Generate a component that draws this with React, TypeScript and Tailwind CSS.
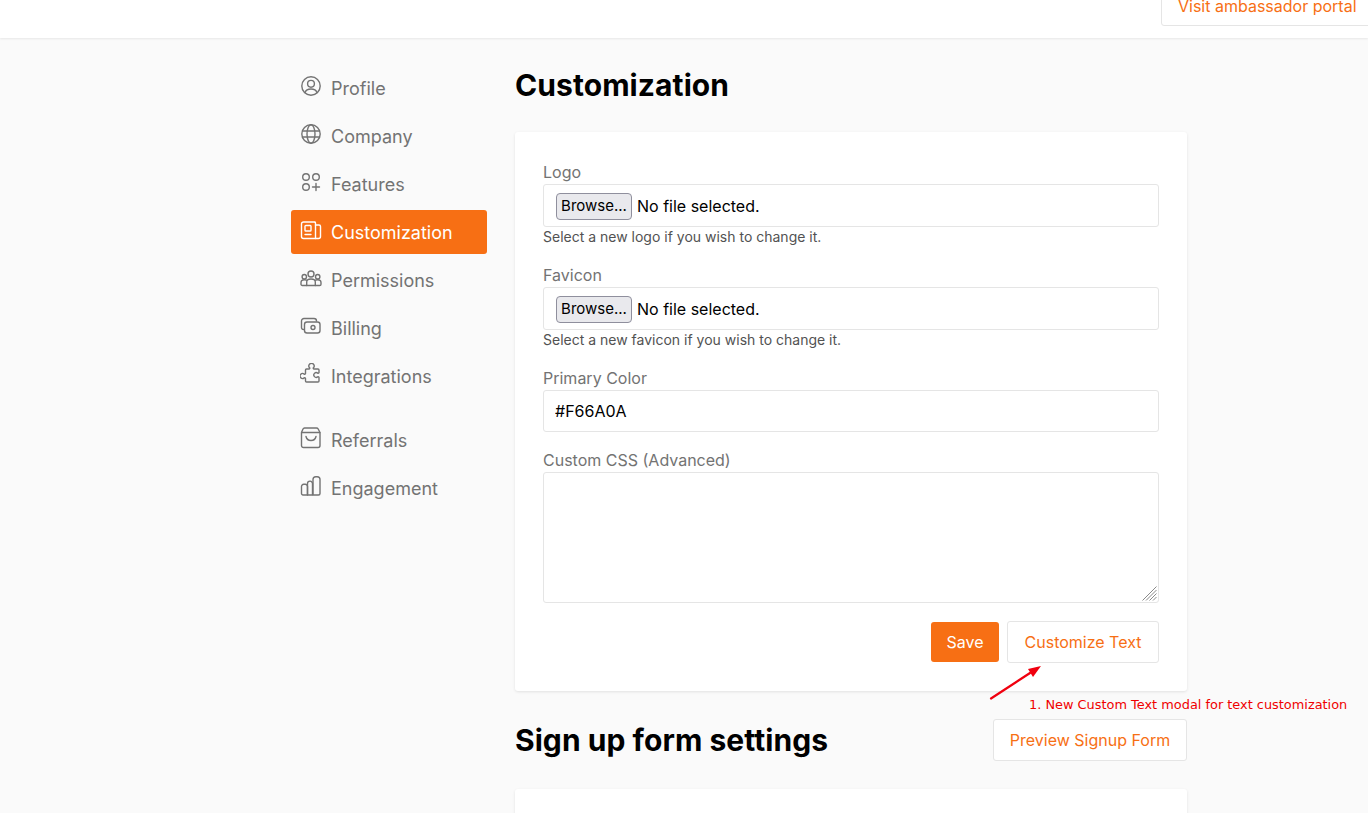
import type { ReactNode } from 'react'

function Icon({ children }: { children: ReactNode }) {
  return (
    <svg viewBox="0 0 22 22" fill="none" stroke="currentColor" strokeWidth="1.4" strokeLinecap="round" strokeLinejoin="round" className="h-[22px] w-[22px] shrink-0">
      {children}
    </svg>
  )
}

const NAV_TOP = [
  {
    label: 'Profile',
    icon: (
      <>
        <circle cx="11" cy="11" r="9.2" />
        <circle cx="11" cy="8.8" r="3.4" />
        <path d="M5 17.500c.8-2.400 2.800-3.500 6-3.500s5.200 1.100 6 3.500" />
      </>
    ),
  },
  {
    label: 'Company',
    icon: (
      <>
        <circle cx="11" cy="11" r="9.2" />
        <path d="M2.500 8h17M2.500 14h17" />
        <ellipse cx="11" cy="11" rx="4" ry="9.200" />
      </>
    ),
  },
  {
    label: 'Features',
    icon: (
      <>
        <circle cx="6" cy="6" r="3.300" />
        <circle cx="16" cy="6" r="3.300" />
        <circle cx="6" cy="16" r="3.300" />
        <path d="M16 12.500v7M12.500 16h7" />
      </>
    ),
  },
  {
    label: 'Customization',
    active: true,
    icon: (
      <>
        <path d="M15 3H3.500a2 2 0 0 0-2 2v12.500a2 2 0 0 0 2 2h15a2 2 0 0 0 2-2V7.500a1.500 1.500 0 0 0-1.500-1.500h-3.500" />
        <path d="M15 3.500a.5.5 0 0 1 .5.5v15.500" />
        <rect x="5" y="6.500" width="6" height="5.500" rx="0.800" />
        <path d="M5 15.500h6" />
      </>
    ),
  },
  {
    label: 'Permissions',
    icon: (
      <>
        <circle cx="11" cy="7" r="3" />
        <circle cx="4.300" cy="9.700" r="2.200" />
        <circle cx="17.700" cy="9.700" r="2.200" />
        <path d="M6.700 18.500v-3.500c0-1.800 1.800-3 4.300-3s4.300 1.200 4.300 3v3.500z" />
        <path d="M6.700 18.500H2.300a1.300 1.300 0 0 1-1.300-1.300v-1.500c0-2 1.500-3 3.300-3 .8 0 1.500.1 2.200.5M15.300 18.500h4.400a1.300 1.300 0 0 0 1.300-1.300v-1.500c0-2-1.500-3-3.300-3-.8 0-1.500.1-2.200.5" />
      </>
    ),
  },
  {
    label: 'Billing',
    icon: (
      <>
        <path d="M3.500 14.500a2 2 0 0 1-2-2V6a2.500 2.500 0 0 1 2.500-2.500h10a2.500 2.500 0 0 1 2.500 2.500" />
        <rect x="4.500" y="7" width="15.500" height="11" rx="2.500" />
        <circle cx="13" cy="12.500" r="2" />
      </>
    ),
  },
  {
    label: 'Integrations',
    icon: (
      <path d="M6.500 6H9a.8.8 0 0 0 .6-1.300 2.600 2.600 0 1 1 3.800 0 .8.8 0 0 0 .6 1.300h4a1 1 0 0 1 1 1v2.500a.8.8 0 0 1-1.300.6 2.400 2.400 0 1 0 0 3.800.8.8 0 0 1 1.300.6V18a1 1 0 0 1-1 1H6.500a1 1 0 0 1-1-1v-2.500a.8.8 0 0 0-1.300-.6 2.500 2.500 0 1 1 0-3.800.8.8 0 0 0 1.300-.6V7a1 1 0 0 1 1-1z" />
    ),
  },
]

const NAV_BOTTOM = [
  {
    label: 'Referrals',
    icon: (
      <>
        <path d="M4.500 1h12a2 2 0 0 1 1.700 1l1.800 3.500V18.500a2 2 0 0 1-2 2H3.500a2 2 0 0 1-2-2V5.500L3 2a2 2 0 0 1 1.500-1z" />
        <path d="M1.800 5.500h18" />
        <path d="M6 9.500c.6 2.600 2.700 4 5 4s4.400-1.400 5-4" />
      </>
    ),
  },
  {
    label: 'Engagement',
    icon: (
      <>
        <path d="M7.500 20H3a1.500 1.500 0 0 1-1.500-1.500v-7A2.200 2.200 0 0 1 3.700 9.300h1.600a2.200 2.200 0 0 1 2.200 2.200z" />
        <path d="M7.500 20V8.500a2.500 2.500 0 0 1 5 0.200V20z" />
        <path d="M13 20V4.500a2.800 2.800 0 0 1 2.800-2.800h1.400A2.800 2.800 0 0 1 20 4.500V18.500a1.500 1.500 0 0 1-1.500 1.500z" />
      </>
    ),
  },
]

function NavItem({ label, icon, active }: { label: string; icon: ReactNode; active?: boolean }) {
  return (
    <a className={`flex h-[44px] items-center gap-[9px] rounded-[3px] pl-[9px] text-[18px] ${active ? 'bg-[#f76f14] text-white' : 'text-[#737373]'}`}>
      <span className="-mt-[4px] flex">{icon}</span>
      <span>{label}</span>
    </a>
  )
}

function FileField({ label, help }: { label: string; help: string }) {
  return (
    <div className="mb-[16px]">
      <label className="block h-[24px] text-[16px] leading-[24px] text-[#737373]">{label}</label>
      <div className="flex h-[43px] items-center rounded-[3px] border border-[#e5e5e5] bg-white pl-[12px]">
        <button className="mt-[1px] h-[27px] w-[76px] rounded-[4px] border border-[#8f8f9d] bg-[#e9e9ed] text-[15px] text-black">Browse...</button>
        <span className="ml-[5px] text-[16px] text-black">No file selected.</span>
      </div>
      <p className="h-[20px] text-[14px] leading-[20px] text-[#525252]">{help}</p>
    </div>
  )
}

export default function App() {
  return (
    <div className="relative h-[813px] overflow-hidden bg-[#fafafa] font-['Inter',sans-serif]">
      {/* top bar */}
      <header className="flex h-[38px] justify-end bg-white shadow-[0_1px_2px_rgba(0,0,0,0.08)]">
        <a className="-mr-[20px] -mt-[16px] flex h-[42px] w-[227px] items-center rounded-[3px] border border-[#e5e5e5] bg-white pl-[16px] pt-[2px] text-[16px] text-[#f76f14]">
          Visit ambassador portal
        </a>
      </header>

      <div className="ml-[291px] flex w-[896px] gap-[28px]">
        {/* sidebar */}
        <nav className="w-[196px] shrink-0 pt-[28px]">
          <div className="flex flex-col gap-[4px]">
            {NAV_TOP.map((item) => (
              <NavItem key={item.label} label={item.label} active={item.active} icon={<Icon>{item.icon}</Icon>} />
            ))}
          </div>
          <div className="mt-[20px] flex flex-col gap-[4px]">
            {NAV_BOTTOM.map((item) => (
              <NavItem key={item.label} label={item.label} icon={<Icon>{item.icon}</Icon>} />
            ))}
          </div>
        </nav>

        {/* main */}
        <main className="w-[672px] pt-[28px]">
          <h1 className="h-[38px] text-[30px] font-bold leading-[38px] tracking-[0.08px] text-black">Customization</h1>

          <section className="mt-[28px] h-[559px] rounded-[3px] bg-white px-[28px] pt-[28px] shadow-[0_1px_3px_rgba(0,0,0,0.1)]">
            <FileField label="Logo" help="Select a new logo if you wish to change it." />
            <FileField label="Favicon" help="Select a new favicon if you wish to change it." />

            <label className="block h-[24px] text-[16px] leading-[24px] text-[#737373]">Primary Color</label>
            <input
              readOnly
              value="#F66A0A"
              className="block h-[42px] w-full rounded-[3px] border border-[#e5e5e5] bg-white px-[11px] text-[16px] text-black outline-none"
            />

            <label className="mt-[16px] block h-[24px] text-[16px] leading-[24px] text-[#737373]">Custom CSS (Advanced)</label>
            <div className="relative">
              <textarea className="block h-[131px] w-full resize-none rounded-[3px] border border-[#e5e5e5] bg-white outline-none" />
              {/* resize grip */}
              <svg className="absolute bottom-[2px] right-[2px] h-[15px] w-[15px]" viewBox="0 0 15 15" stroke="#8a8a8a" strokeWidth="1">
                <path d="M0.500 14.500 14.500 0.500M4 14.500 14.500 4M7.500 14.500l7-7M11 14.500l3.500-3.500" />
              </svg>
            </div>

            <div className="mt-[18px] flex items-center justify-end gap-[8px]">
              <button className="h-[40px] w-[68px] rounded-[3px] bg-[#f76f14] text-[16px] text-white">Save</button>
              <button className="h-[42px] w-[152px] rounded-[3px] border border-[#e5e5e5] bg-white text-[16px] text-[#f76f14]">Customize Text</button>
            </div>
          </section>

          <div className="mt-[28px] flex items-center justify-between">
            <h2 className="text-[30px] font-bold leading-[42px] tracking-[0.05px] text-black">Sign up form settings</h2>
            <button className="h-[42px] w-[194px] rounded-[3px] border border-[#e5e5e5] bg-white text-[16px] text-[#f76f14]">Preview Signup Form</button>
          </div>

          <section className="mt-[28px] h-[200px] rounded-[3px] bg-white shadow-[0_1px_3px_rgba(0,0,0,0.1)]" />
        </main>
      </div>

      {/* annotation drawn over the screenshot */}
      <svg className="absolute left-[985px] top-[660px] h-[42px] w-[62px]" viewBox="0 0 62 42" fill="none">
        <path d="M6 38.500 L45 13" stroke="#f0000f" strokeWidth="2.200" strokeLinecap="round" />
        <path d="M56 6 L43 9 L48 17 Z" fill="#f0000f" />
      </svg>
      <span className="absolute left-[1029px] top-[696px] font-['DejaVu_Sans',sans-serif] text-[12.9px] leading-[18px] text-[#f00000]">
        1. New Custom Text modal for text customization
      </span>
    </div>
  )
}
